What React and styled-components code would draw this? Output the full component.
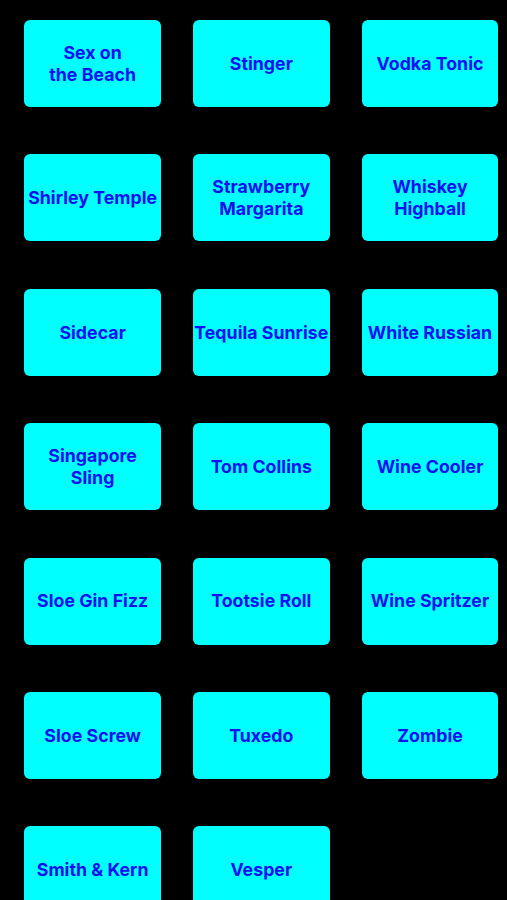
import styled, { createGlobalStyle } from 'styled-components';

const GlobalStyle = createGlobalStyle`
  html, body {
    margin: 0;
    padding: 0;
    background: #000000;
  }
`;

const Page = styled.div`
  width: 507px;
  min-height: 900px;
  background: #000000;
  box-sizing: border-box;
  padding: 20px 0 0 24.3px;
  overflow: hidden;
`;

const Grid = styled.div`
  display: grid;
  grid-template-columns: repeat(3, 136.7px);
  grid-auto-rows: 87px;
  column-gap: 32px;
  row-gap: 47.4px;
`;

const DrinkButton = styled.div`
  display: flex;
  align-items: center;
  justify-content: center;
  background: #00ffff;
  border-radius: 6px;
  text-align: center;
  font-family: Inter, 'Liberation Sans', sans-serif;
  font-weight: 700;
  font-size: 17.8px;
  line-height: 21.5px;
  letter-spacing: 0;
  color: #1010f0;
  white-space: pre-line;
  overflow: hidden;
`;

const drinks = [
  'Sex on\nthe Beach',
  'Stinger',
  'Vodka Tonic',
  'Shirley Temple',
  'Strawberry\nMargarita',
  'Whiskey\nHighball',
  'Sidecar',
  'Tequila Sunrise',
  'White Russian',
  'Singapore\nSling',
  'Tom Collins',
  'Wine Cooler',
  'Sloe Gin Fizz',
  'Tootsie Roll',
  'Wine Spritzer',
  'Sloe Screw',
  'Tuxedo',
  'Zombie',
  'Smith & Kern',
  'Vesper',
];

const App = () => {
  return (
    <Page>
      <GlobalStyle />
      <Grid>
        {drinks.map((name) => (
          <DrinkButton key={name}>{name}</DrinkButton>
        ))}
      </Grid>
    </Page>
  );
};

export default App;
